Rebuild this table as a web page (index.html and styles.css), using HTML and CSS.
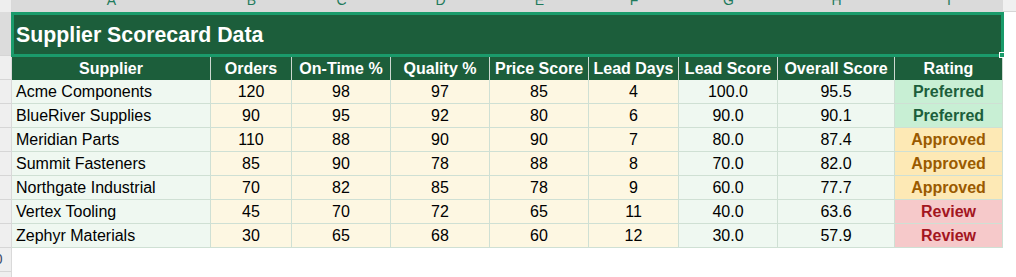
FILE: index.html
```html
<!DOCTYPE html>
<html>
<head>
<meta charset="utf-8">
<title>Supplier Scorecard Data</title>
<link rel="stylesheet" href="styles.css">
</head>
<body>
<div class="sheet">
  <div class="corner"></div>
  <div class="ch"><span>A</span></div>
  <div class="ch"><span>B</span></div>
  <div class="ch"><span>C</span></div>
  <div class="ch"><span>D</span></div>
  <div class="ch"><span>E</span></div>
  <div class="ch"><span>F</span></div>
  <div class="ch"><span>G</span></div>
  <div class="ch"><span>H</span></div>
  <div class="ch"><span>I</span></div>
  <div class="ch-rest"></div>

  <div class="rh rh-sel"></div>
  <div class="title">Supplier Scorecard Data<div class="sel"><div class="handle"></div></div></div>
  <div class="blank"></div>

  <div class="rh"></div>
  <div class="th">Supplier</div>
  <div class="th">Orders</div>
  <div class="th">On-Time %</div>
  <div class="th">Quality %</div>
  <div class="th">Price Score</div>
  <div class="th">Lead Days</div>
  <div class="th">Lead Score</div>
  <div class="th">Overall Score</div>
  <div class="th">Rating</div>
  <div class="blank"></div>

  <div class="rh"></div>
  <div class="c txt mint">Acme Components</div>
  <div class="c cream">120</div><div class="c cream">98</div><div class="c cream">97</div><div class="c cream">85</div><div class="c cream">4</div>
  <div class="c mint">100.0</div><div class="c mint">95.5</div>
  <div class="c pref">Preferred</div>
  <div class="blank"></div>

  <div class="rh"></div>
  <div class="c txt mint">BlueRiver Supplies</div>
  <div class="c cream">90</div><div class="c cream">95</div><div class="c cream">92</div><div class="c cream">80</div><div class="c cream">6</div>
  <div class="c mint">90.0</div><div class="c mint">90.1</div>
  <div class="c pref">Preferred</div>
  <div class="blank"></div>

  <div class="rh"></div>
  <div class="c txt mint">Meridian Parts</div>
  <div class="c cream">110</div><div class="c cream">88</div><div class="c cream">90</div><div class="c cream">90</div><div class="c cream">7</div>
  <div class="c mint">80.0</div><div class="c mint">87.4</div>
  <div class="c appr">Approved</div>
  <div class="blank"></div>

  <div class="rh"></div>
  <div class="c txt mint">Summit Fasteners</div>
  <div class="c cream">85</div><div class="c cream">90</div><div class="c cream">78</div><div class="c cream">88</div><div class="c cream">8</div>
  <div class="c mint">70.0</div><div class="c mint">82.0</div>
  <div class="c appr">Approved</div>
  <div class="blank"></div>

  <div class="rh"></div>
  <div class="c txt mint">Northgate Industrial</div>
  <div class="c cream">70</div><div class="c cream">82</div><div class="c cream">85</div><div class="c cream">78</div><div class="c cream">9</div>
  <div class="c mint">60.0</div><div class="c mint">77.7</div>
  <div class="c appr">Approved</div>
  <div class="blank"></div>

  <div class="rh"></div>
  <div class="c txt mint">Vertex Tooling</div>
  <div class="c cream">45</div><div class="c cream">70</div><div class="c cream">72</div><div class="c cream">65</div><div class="c cream">11</div>
  <div class="c mint">40.0</div><div class="c mint">63.6</div>
  <div class="c rev">Review</div>
  <div class="blank"></div>

  <div class="rh"></div>
  <div class="c txt mint">Zephyr Materials</div>
  <div class="c cream">30</div><div class="c cream">65</div><div class="c cream">68</div><div class="c cream">60</div><div class="c cream">12</div>
  <div class="c mint">30.0</div><div class="c mint">57.9</div>
  <div class="c rev">Review</div>
  <div class="blank"></div>

  <div class="rh"><span class="rn">10</span></div>
  <div class="empty"></div>

  <div class="rh rh-last"></div>
  <div class="empty"></div>
</div>
</body>
</html>
```

FILE: styles.css
```css
* { box-sizing: border-box; }
html, body { margin: 0; padding: 0; background: #ffffff; }
body {
  font-family: "Liberation Sans", Arial, sans-serif;
  overflow: hidden;
  height: 277px;
}
.sheet {
  display: grid;
  grid-template-columns: 12px 199px 81px 99px 99px 99px 90px 99px 117px 108px 1fr;
  grid-template-rows: 12px 44px repeat(9, 24px) 5px;
  overflow: hidden;
}
.corner { background: #eeeeee; border-right: 1px solid #d9d9d9; }
.ch {
  background: #dadada;
  overflow: hidden;
  text-align: center;
  color: #1f7b5c;
  font-size: 14px;
  line-height: 14px;
}
.ch span { display: block; margin-top: -7px; }
.ch-rest { background: #f0f0f0; border-bottom: 1px solid #d6d6d6; }

.rh {
  background: #efefef;
  border-bottom: 1px solid #d6d6d6;
  border-right: 1px solid #d9d9d9;
  overflow: hidden;
  font-size: 14px;
  line-height: 23px;
  color: #3b4b6b;
  white-space: nowrap;
}
.rh-sel { background: #dcdcdc; }
.rh-last { border-bottom: none; }
.rn { display: inline-block; margin-left: -13px; }

.title {
  grid-column: 2 / 11;
  position: relative;
  background: #1c5e3b;
  color: #ffffff;
  font-weight: bold;
  font-size: 21.3px;
  line-height: 42px;
  padding: 2px 0 0 4px;
  white-space: nowrap;
}
.sel {
  position: absolute;
  left: -1px;
  top: 0;
  right: -1px;
  bottom: -1px;
  border: 3px solid #1a9b6b;
  z-index: 2;
}
.handle {
  position: absolute;
  right: -4px;
  bottom: -4px;
  width: 6px;
  height: 6px;
  background: #1a9b6b;
  border: 1px solid #ffffff;
}
.blank { background: #ffffff; }
.empty { grid-column: 2 / -1; background: #ffffff; }

.th {
  background: #1c5e3b;
  color: #ffffff;
  font-weight: bold;
  font-size: 16px;
  line-height: 23px;
  padding-top: 1px;
  text-align: center;
  white-space: nowrap;
  overflow: hidden;
  border-right: 1px solid #cdd8d0;
}
.c {
  font-size: 16px;
  line-height: 23px;
  color: #000000;
  text-align: center;
  white-space: nowrap;
  overflow: hidden;
  border-right: 1px solid #cfe0d4;
  border-bottom: 1px solid #cfe0d4;
}
.txt { text-align: left; padding-left: 4px; }
.mint { background: #eff8f1; }
.cream { background: #fdf7e2; }
.pref { background: #c8efd4; color: #1c5e3b; font-weight: bold; }
.appr { background: #fde9b5; color: #9a5a00; font-weight: bold; }
.rev { background: #f6c9ca; color: #a3161f; font-weight: bold; }
```
